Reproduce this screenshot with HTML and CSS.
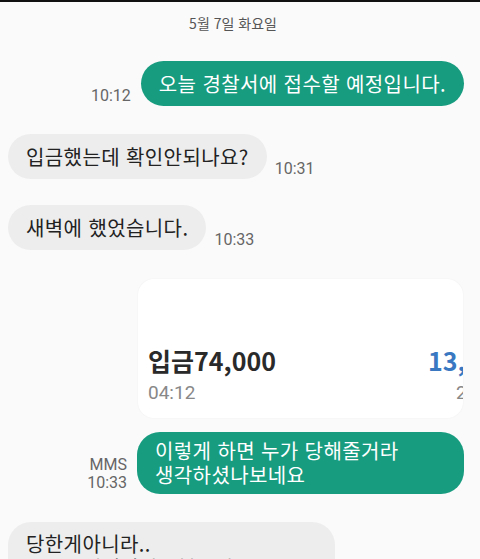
FILE: index.html
```html
<!DOCTYPE html>
<html lang="ko">
<head>
    <meta charset="UTF-8">
    <meta name="viewport" content="width=device-width, initial-scale=1.0">
    <title>메시지</title>
    <link rel="stylesheet" href="styles.css">
</head>
<body>
    <div class="topbar"></div>
    <div class="date">5월 7일 화요일</div>

    <div class="chat">
        <div class="row out first">
            <span class="time">10:12</span>
            <div class="bubble sent">오늘 경찰서에 접수할 예정입니다.</div>
        </div>

        <div class="row in">
            <div class="bubble received">입금했는데 확인안되나요?</div>
            <span class="time">10:31</span>
        </div>

        <div class="row in tight">
            <div class="bubble received">새벽에 했었습니다.</div>
            <span class="time">10:33</span>
        </div>

        <div class="row out card-row">
            <div class="card">
                <div class="receipt">
                    <div class="deposit">
                        <div class="amount">입금74,000</div>
                        <div class="when">04:12</div>
                    </div>
                    <div class="balance">
                        <div class="amount blue">13,520</div>
                        <div class="when later">21:40</div>
                    </div>
                </div>
            </div>
        </div>

        <div class="row out after-card">
            <span class="time stacked">MMS<br>10:33</span>
            <div class="bubble sent multi">이렇게 하면 누가 당해줄거라 생각하셨나보네요</div>
        </div>

        <div class="row in">
            <div class="bubble received multi last">당한게아니라.. 보증금내래서입금했는데</div>
        </div>
    </div>
</body>
</html>
```

FILE: styles.css
```css
body {
    margin: 0;
    height: 559px;
    overflow: hidden;
    background: #fafafa;
    font-family: "Noto Sans CJK KR", "Noto Sans", sans-serif;
    color: #222;
}
.topbar {
    height: 2px;
    background: #111;
}
.date {
    margin-top: 11px;
    padding-right: 14px;
    text-align: center;
    font-size: 14px;
    line-height: 20px;
    color: #555;
}
.chat {
    display: flex;
    flex-direction: column;
}
.row {
    display: flex;
    align-items: flex-end;
    margin-top: 28px;
}
.row.tight {
    margin-top: 26px;
}
.row.out {
    justify-content: flex-end;
    padding-right: 16px;
}
.row.in {
    padding-left: 8px;
}
.time {
    font-family: Roboto, "Liberation Sans", sans-serif;
    font-size: 16px;
    line-height: 20px;
    color: #666;
}
.row.out .time {
    margin-right: 10px;
}
.row.in .time {
    margin-left: 8px;
}
.time.stacked {
    text-align: right;
    line-height: 18px;
    margin-bottom: 2px;
}
.bubble {
    font-size: 20px;
    letter-spacing: 0.4px;
    line-height: 25px;
    padding: 10px 18px;
    border-radius: 23px;
    max-width: 291px;
    word-break: keep-all;
}
.bubble.sent {
    background: #179c7f;
    color: #fff;
}
.bubble.received {
    background: #ededed;
    color: #222;
}
.bubble.multi {
    padding-top: 7px;
    padding-bottom: 7px;
    line-height: 24px;
}
.bubble.last {
    padding-top: 10px;
}
.row.card-row {
    margin-top: 29px;
    padding-right: 17px;
}
.card {
    width: 325px;
    height: 139px;
    background: #fff;
    border-radius: 16px;
    box-shadow: 0 0 2px rgba(0, 0, 0, 0.05);
    overflow: hidden;
}
.receipt {
    display: flex;
    width: 420px;
    padding: 64px 0 0 10px;
}
.deposit {
    width: 280px;
    flex: none;
}
.amount {
    font-size: 25px;
    font-weight: bold;
    line-height: 34px;
    color: #2a2a2a;
}
.amount.blue {
    color: #3a78c2;
}
.when {
    margin-top: 4px;
    font-family: Roboto, "Liberation Sans", sans-serif;
    font-size: 19px;
    line-height: 24px;
    color: #888;
}
.when.later {
    margin-left: 28px;
}
.row.after-card {
    margin-top: 14px;
}
```
